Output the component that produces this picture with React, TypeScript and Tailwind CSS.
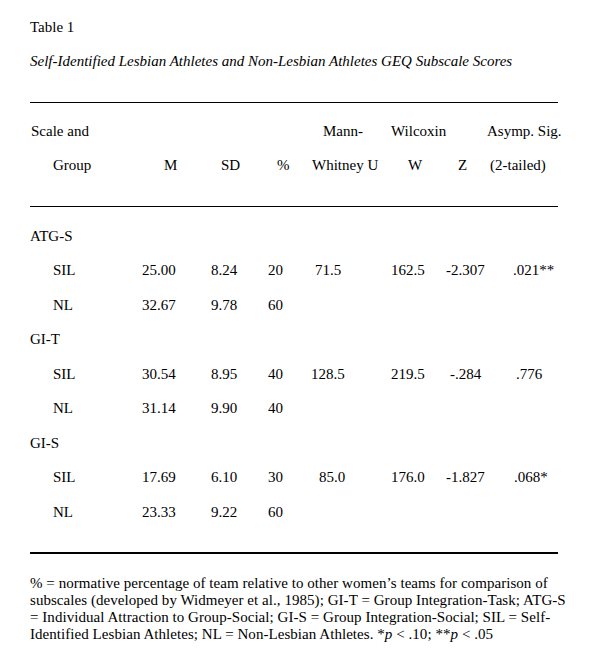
import React from "react";

type Cell = { v: string; c: string };

const cols = "grid grid-cols-[110px_60px_50px_50px_85px_55px_46px_79px]";

const header1: Cell[] = [
  { v: "Scale and", c: "pl-[1px]" },
  { v: "", c: "" },
  { v: "", c: "" },
  { v: "", c: "" },
  { v: "Mann-", c: "pl-[23px]" },
  { v: "Wilcoxin", c: "pl-[6px]" },
  { v: "", c: "" },
  { v: "Asymp. Sig.", c: "pl-[1px]" },
];

const header2: Cell[] = [
  { v: "Group", c: "pl-[23px]" },
  { v: "M", c: "pl-[24px]" },
  { v: "SD", c: "pl-[21px]" },
  { v: "%", c: "pl-[27px]" },
  { v: "Whitney U", c: "pl-[12px]" },
  { v: "W", c: "pl-[23px]" },
  { v: "Z", c: "pl-[18px]" },
  { v: "(2-tailed)", c: "pl-[4px]" },
];

const sections = [
  {
    scale: "ATG-S",
    sil: [
      { v: "25.00", c: "pl-[2px]" },
      { v: "8.24", c: "pl-[11px]" },
      { v: "20", c: "pl-[18px]" },
      { v: "71.5", c: "pl-[15px]" },
      { v: "162.5", c: "pl-[6px]" },
      { v: "-2.307", c: "pl-[6px]" },
      { v: ".021**", c: "pl-[27px]" },
    ],
    nl: ["32.67", "9.78", "60"],
  },
  {
    scale: "GI-T",
    sil: [
      { v: "30.54", c: "pl-[2px]" },
      { v: "8.95", c: "pl-[11px]" },
      { v: "40", c: "pl-[18px]" },
      { v: "128.5", c: "pl-[11px]" },
      { v: "219.5", c: "pl-[6px]" },
      { v: "-.284", c: "pl-[10px]" },
      { v: ".776", c: "pl-[30px]" },
    ],
    nl: ["31.14", "9.90", "40"],
  },
  {
    scale: "GI-S",
    sil: [
      { v: "17.69", c: "pl-[2px]" },
      { v: "6.10", c: "pl-[11px]" },
      { v: "30", c: "pl-[18px]" },
      { v: "85.0", c: "pl-[19px]" },
      { v: "176.0", c: "pl-[6px]" },
      { v: "-1.827", c: "pl-[6px]" },
      { v: ".068*", c: "pl-[28px]" },
    ],
    nl: ["23.33", "9.22", "60"],
  },
];

function Row({ cells, tall }: { cells: Cell[]; tall?: boolean }) {
  return (
    <div className={`${cols} ${tall ? "h-[34.5px]" : "h-[34px]"} items-center`}>
      {cells.map((cell, i) => (
        <div key={i} className={`whitespace-nowrap ${cell.c}`}>
          {cell.v}
        </div>
      ))}
    </div>
  );
}

export default function App() {
  return (
    <div className="w-[592px] h-[670px] bg-white text-black font-['Liberation_Serif','Times_New_Roman',serif] text-[15px] leading-[17px] pl-[30px] pt-[19px]">
      <p>Table 1</p>
      <p className="mt-[17px] italic">
        Self-Identified Lesbian Athletes and Non-Lesbian Athletes GEQ Subscale Scores
      </p>

      <div className="w-[528px] border-t border-black mt-[32px]" />

      {/* column heads */}
      <div className="mt-[11px]">
        <Row cells={header1} />
        <Row cells={header2} />
      </div>

      <div className="w-[528px] border-t border-black mt-[24px]" />

      <div className="mt-[12px]">
        {sections.map((s) => (
          <div key={s.scale}>
            <Row tall cells={[{ v: s.scale, c: "" }]} />
            <Row tall cells={[{ v: "SIL", c: "pl-[23px]" }, ...s.sil]} />
            <Row
              tall
              cells={[
                { v: "NL", c: "pl-[23px]" },
                { v: s.nl[0], c: "pl-[2px]" },
                { v: s.nl[1], c: "pl-[11px]" },
                { v: s.nl[2], c: "pl-[18px]" },
              ]}
            />
          </div>
        ))}
      </div>

      <div className="w-[528px] border-t-2 border-black mt-[22px]" />

      {/* note */}
      <div className="mt-[21px] whitespace-nowrap tracking-[0.05px]">
        <span className="block">
          % = normative percentage of team relative to other women’s teams for comparison of
        </span>
        <span className="block">
          subscales (developed by Widmeyer et al., 1985); GI-T = Group Integration-Task; ATG-S
        </span>
        <span className="block">
          = Individual Attraction to Group-Social; GI-S = Group Integration-Social; SIL = Self-
        </span>
        <span className="block">
          Identified Lesbian Athletes; NL = Non-Lesbian Athletes. *<i>p</i> &lt; .10; **<i>p</i> &lt; .05
        </span>
      </div>
    </div>
  );
}
